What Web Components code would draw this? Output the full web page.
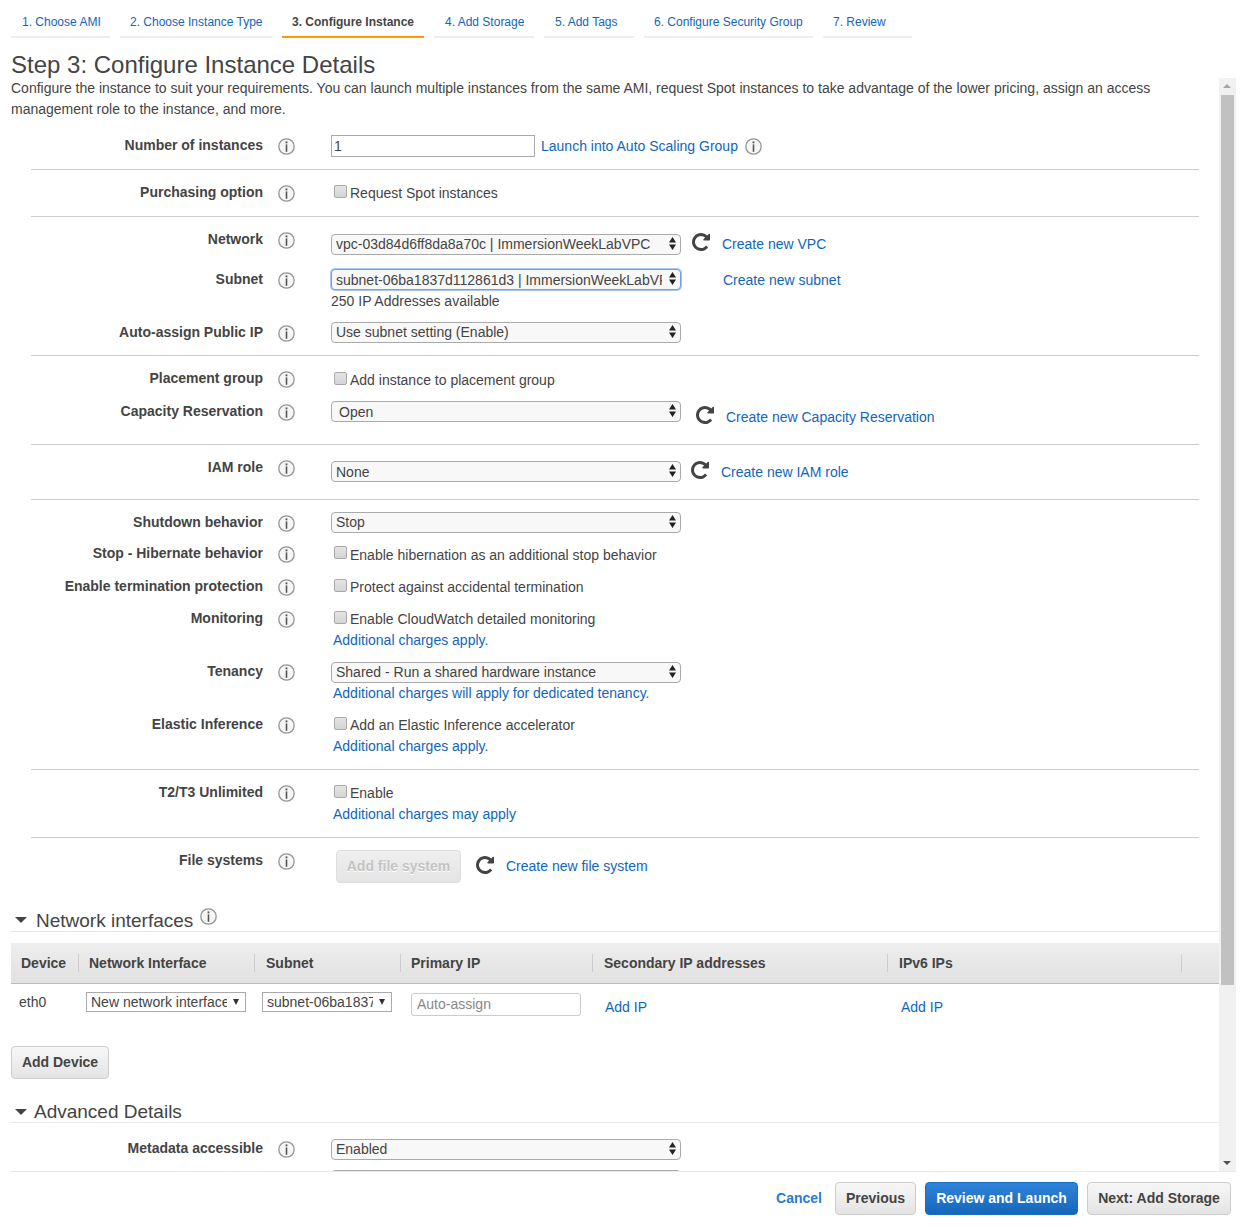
<!DOCTYPE html>
<html>
<head>
<meta charset="utf-8">
<title>Step 3: Configure Instance Details</title>
<style>
	html, body { margin: 0; padding: 0; }
	body {
		font: 14px/20px "Liberation Sans", Arial, sans-serif;
		color: #444;
		background: #fff;
		width: 1242px;
		height: 1229px;
		overflow: hidden;
	}
</style>
</head>
<body>
<launch-wizard>
	<wizard-tabs>
		<wizard-tab style="width:99px">1. Choose AMI</wizard-tab>
		<wizard-tab style="width:152px;padding-left:10px">2. Choose Instance Type</wizard-tab>
		<wizard-tab active style="width:142px;padding-left:10px">3. Configure Instance</wizard-tab>
		<wizard-tab style="width:100px">4. Add Storage</wizard-tab>
		<wizard-tab style="width:90px">5. Add Tags</wizard-tab>
		<wizard-tab style="width:169px;padding-left:10px">6. Configure Security Group</wizard-tab>
		<wizard-tab style="width:89px;padding-left:10px">7. Review</wizard-tab>
	</wizard-tabs>
	<page-title>Step 3: Configure Instance Details</page-title>
	<scroll-pane>
		<intro-text>Configure the instance to suit your requirements. You can launch multiple instances from the same AMI, request Spot instances to take advantage of the lower pricing, assign an access management role to the instance, and more.</intro-text>

		<form-section>
			<form-row label="Number of instances" height="34" style="--pad:15px">
				<control-line>
					<text-box style="width:204px">1</text-box>
					<aws-link style="margin:1px 0 0 6px">Launch into Auto Scaling Group</aws-link>
					<info-icon style="margin:3px 0 0 7px"></info-icon>
				</control-line>
			</form-row>
		</form-section>

		<form-section>
			<form-row label="Purchasing option" height="34">
				<aws-check>Request Spot instances</aws-check>
			</form-row>
		</form-section>

		<form-section>
			<form-row label="Network" height="40">
				<control-line style="margin-top:5px">
					<aws-select>vpc-03d84d6ff8da8a70c | ImmersionWeekLabVPC</aws-select>
					<reload-icon style="margin:-1px 0 0 11px"></reload-icon>
					<aws-link style="margin:0 0 0 12px">Create new VPC</aws-link>
				</control-line>
			</form-row>
			<form-row label="Subnet" height="53">
				<control-line>
					<aws-select focused low>subnet-06ba1837d112861d3 | ImmersionWeekLabVPC</aws-select>
					<aws-link style="margin:1px 0 0 42px">Create new subnet</aws-link>
				</control-line>
				<plain-note>250 IP Addresses available</plain-note>
			</form-row>
			<form-row label="Auto-assign Public IP" height="33">
				<aws-select>Use subnet setting (Enable)</aws-select>
			</form-row>
		</form-section>

		<form-section>
			<form-row label="Placement group" height="33">
				<aws-check style="margin-top:2px">Add instance to placement group</aws-check>
			</form-row>
			<form-row label="Capacity Reservation" height="43">
				<control-line>
					<aws-select inset="7" low>Open</aws-select>
					<reload-icon style="margin:5px 0 0 15px"></reload-icon>
					<aws-link style="margin:6px 0 0 12px">Create new Capacity Reservation</aws-link>
				</control-line>
			</form-row>
		</form-section>

		<form-section>
			<form-row label="IAM role" height="42">
				<control-line style="margin-top:4px">
					<aws-select low>None</aws-select>
					<reload-icon style="margin:0 0 0 10px"></reload-icon>
					<aws-link style="margin:1px 0 0 12px">Create new IAM role</aws-link>
				</control-line>
			</form-row>
		</form-section>

		<form-section>
			<form-row label="Shutdown behavior" height="31">
				<aws-select>Stop</aws-select>
			</form-row>
			<form-row label="Stop - Hibernate behavior" height="33">
				<aws-check style="margin-top:2px;--box-top:1px">Enable hibernation as an additional stop behavior</aws-check>
			</form-row>
			<form-row label="Enable termination protection" height="32">
				<aws-check>Protect against accidental termination</aws-check>
			</form-row>
			<form-row label="Monitoring" height="53">
				<aws-check>Enable CloudWatch detailed monitoring</aws-check>
				<aws-link style="margin:1px 0 0 2px">Additional charges apply.</aws-link>
			</form-row>
			<form-row label="Tenancy" height="53">
				<aws-select style="margin-top:1px">Shared - Run a shared hardware instance</aws-select>
				<aws-link style="margin:0 0 0 2px">Additional charges will apply for dedicated tenancy.</aws-link>
			</form-row>
			<form-row label="Elastic Inference" height="55">
				<aws-check>Add an Elastic Inference accelerator</aws-check>
				<aws-link style="margin:1px 0 0 2px">Additional charges apply.</aws-link>
			</form-row>
		</form-section>

		<form-section>
			<form-row label="T2/T3 Unlimited" height="55">
				<aws-check>Enable</aws-check>
				<aws-link style="margin:1px 0 0 2px">Additional charges may apply</aws-link>
			</form-row>
		</form-section>

		<form-section plain>
			<form-row label="File systems" height="59">
				<control-line>
					<aws-button disabled style="margin-left:5px;width:125px">Add file system</aws-button>
					<reload-icon style="margin:6px 0 0 15px"></reload-icon>
					<aws-link style="margin:6px 0 0 12px">Create new file system</aws-link>
				</control-line>
			</form-row>
		</form-section>

		<section-heading text-left="25" info style="--name-top:1px">Network interfaces</section-heading>
		<network-table></network-table>
		<aws-button style="width:98px;display:block">Add Device</aws-button>

		<section-heading text-left="23" style="margin-top:22px;--head-h:21px">Advanced Details</section-heading>
		<form-section plain>
			<form-row label="Metadata accessible" height="32" style="--pad:15px">
				<aws-select style="margin-top:1px">Enabled</aws-select>
			</form-row>
			<form-row label="" height="20" style="--pad:0px">
				<aws-select></aws-select>
			</form-row>
		</form-section>
	</scroll-pane>
	<wizard-footer>
		<aws-link bold style="margin-right:4px">Cancel</aws-link>
		<aws-button style="width:81px">Previous</aws-button>
		<aws-button primary style="width:153px">Review and Launch</aws-button>
		<aws-button style="width:144px">Next: Add Storage</aws-button>
	</wizard-footer>
</launch-wizard>

<script>
	// small helper, every element just stamps its markup in an open shadow root
	class BaseElement extends HTMLElement {
		constructor() {
			super();
			this.attachShadow({ mode: 'open' });
		}

		connectedCallback() {
			this.shadowRoot.innerHTML = this.markup();
		}
	}

	class LaunchWizard extends BaseElement {
		markup() {
			return `<style>:host { display: block; }</style><slot></slot>`;
		}
	}
	customElements.define('launch-wizard', LaunchWizard);

	class WizardTabs extends BaseElement {
		markup() {
			return `<style>
				:host { display: flex; gap: 10px; height: 38px; padding-left: 11px; }
			</style><slot></slot>`;
		}
	}
	customElements.define('wizard-tabs', WizardTabs);

	class WizardTab extends BaseElement {
		markup() {
			return `<style>
				:host {
					display: block;
					box-sizing: border-box;
					height: 38px;
					padding: 12px 0 0 11px;
					font-size: 12px;
					line-height: 20px;
					white-space: nowrap;
					color: #16b;
					border-bottom: 2px solid #eee;
				}
				:host([active]) { color: #444; font-weight: bold; border-bottom-color: #f90; }
			</style><slot></slot>`;
		}
	}
	customElements.define('wizard-tab', WizardTab);

	class PageTitle extends BaseElement {
		markup() {
			return `<style>
				:host {
					display: block;
					height: 40px;
					padding-left: 11px;
					box-sizing: border-box;
					font-size: 24px;
					line-height: 54px;
					overflow: visible;
					white-space: nowrap;
				}
			</style><slot></slot>`;
		}
	}
	customElements.define('page-title', PageTitle);

	class ScrollPane extends BaseElement {
		markup() {
			return `<style>
				:host { display: flex; height: 1093px; padding-left: 11px; width: 1225px; }
				.content { width: 1208px; height: 100%; overflow: hidden; }
				.track {
					position: relative;
					width: 17px;
					height: 100%;
					background: #f1f1f1;
				}
				.thumb {
					position: absolute;
					left: 2px;
					top: 17px;
					width: 13px;
					height: 890px;
					background: #c1c1c1;
				}
				.up, .down {
					position: absolute;
					left: 4px;
					width: 0;
					height: 0;
					border-left: 4px solid transparent;
					border-right: 4px solid transparent;
				}
				.up { top: 6px; border-bottom: 4px solid #a3a3a3; }
				.down { bottom: 6px; border-top: 4px solid #505050; }
			</style>
			<div class="content"><slot></slot></div>
			<div class="track"><div class="up"></div><div class="thumb"></div><div class="down"></div></div>`;
		}
	}
	customElements.define('scroll-pane', ScrollPane);

	class IntroText extends BaseElement {
		markup() {
			return `<style>
				:host { display: block; height: 42px; line-height: 21px; width: 1190px; }
			</style><slot></slot>`;
		}
	}
	customElements.define('intro-text', IntroText);

	class FormSection extends BaseElement {
		markup() {
			return `<style>
				:host { display: block; margin: 0 20px; border-bottom: 1px solid #ccc; }
				:host([plain]) { border-bottom: 0; }
			</style><slot></slot>`;
		}
	}
	customElements.define('form-section', FormSection);

	class FormRow extends BaseElement {
		markup() {
			const label = this.getAttribute('label');
			const height = this.getAttribute('height');
			const first = this === this.parentElement.firstElementChild;
			const icon = label ? '<info-icon></info-icon>' : '';
			return `<style>
				:host {
					display: grid;
					grid-template-columns: 232px 17px 1fr;
					column-gap: 15px;
					height: ${height}px;
					padding-top: var(--pad, ${first ? '12px' : '0'});
				}
				.label { font-weight: bold; text-align: right; white-space: nowrap; }
				info-icon { margin-top: 3px; }
				.controls { margin-left: 21px; min-width: 0; }
			</style>
			<div class="label">${label}</div>
			<div>${icon}</div>
			<div class="controls"><slot></slot></div>`;
		}
	}
	customElements.define('form-row', FormRow);

	class ControlLine extends BaseElement {
		markup() {
			return `<style>:host { display: flex; align-items: flex-start; }</style><slot></slot>`;
		}
	}
	customElements.define('control-line', ControlLine);

	class InfoIcon extends BaseElement {
		markup() {
			return `<style>:host { display: block; width: 17px; height: 17px; flex: none; }
				svg { display: block; }</style>
			<svg width="17" height="17" viewBox="0 0 17 17">
				<circle cx="8.5" cy="8.5" r="7.7" fill="#f6f6f6" stroke="#949494" stroke-width="1.3"/>
				<rect x="7.6" y="3.4" width="1.8" height="1.9" fill="#555"/>
				<rect x="7.7" y="6.4" width="1.6" height="7.4" fill="#555"/>
			</svg>`;
		}
	}
	customElements.define('info-icon', InfoIcon);

	class ReloadIcon extends BaseElement {
		markup() {
			return `<style>:host { display: block; width: 18px; height: 18px; flex: none; }
				svg { display: block; }</style>
			<svg width="18" height="18" viewBox="128 128 1536 1536">
				<path fill="#444" d="M1664 256v448q0 26-19 45t-45 19h-448q-42 0-59-40-17-39 14-69l138-138q-148-137-349-137-104 0-198.5 40.5t-163.5 109.5-109.5 163.5-40.5 198.5 40.5 198.5 109.5 163.5 163.5 109.5 198.5 40.5q119 0 225-52t179-147q7-10 23-12 15 0 25 9l137 138q9 8 9.5 20.5t-7.5 22.5q-109 132-264 204.5t-327 72.5q-156 0-298-61t-245-164-164-245-61-298 61-298 164-245 245-164 298-61q147 0 284.5 55.5t244.5 156.5l130-129q29-31 70-14 39 17 39 59z"/>
			</svg>`;
		}
	}
	customElements.define('reload-icon', ReloadIcon);

	class AwsLink extends BaseElement {
		markup() {
			return `<style>
				:host { display: block; color: #16b; white-space: nowrap; }
				:host([bold]) { font-weight: bold; color: #2a7bd3; }
			</style><slot></slot>`;
		}
	}
	customElements.define('aws-link', AwsLink);

	class PlainNote extends BaseElement {
		markup() {
			return `<style>:host { display: block; margin-top: 1px; }</style><slot></slot>`;
		}
	}
	customElements.define('plain-note', PlainNote);

	class TextBox extends BaseElement {
		markup() {
			return `<style>
				:host {
					display: block;
					box-sizing: border-box;
					height: 22px;
					line-height: 21px;
					padding-left: 2px;
					border: 1px solid #aaa;
					background: #fff;
					flex: none;
				}
			</style><slot></slot>`;
		}
	}
	customElements.define('text-box', TextBox);

	class AwsCheck extends BaseElement {
		markup() {
			return `<style>
				:host { display: flex; margin-top: 1px; white-space: nowrap; }
				.box {
					box-sizing: border-box;
					width: 13px;
					height: 13px;
					margin: var(--box-top, 2px) 3px 0 3px;
					border: 1px solid #aaa;
					border-radius: 2px;
					background: linear-gradient(#e4e4e4, #d4d4d4);
					flex: none;
				}
			</style><div class="box"></div><slot></slot>`;
		}
	}
	customElements.define('aws-check', AwsCheck);

	class AwsSelect extends BaseElement {
		markup() {
			const inset = this.getAttribute('inset') || 4;
			return `<style>
				:host {
					display: block;
					position: relative;
					box-sizing: border-box;
					width: 350px;
					height: 21px;
					flex: none;
					line-height: 19px;
					padding: 0 18px 0 ${inset}px;
					border: 1px solid #aaa;
					border-radius: 4px;
					background: #f8f8f8;
					white-space: nowrap;
				}
				:host([focused]) {
					border-color: #6f9fe6;
					box-shadow: 0 0 0 1px #a9c7f2;
				}
				:host([low]) { line-height: 21px; }
				.value { display: block; overflow: hidden; height: 19px; }
				svg { position: absolute; right: 4px; top: 2px; }
			</style>
			<span class="value"><slot></slot></span>
			<svg width="7" height="13" viewBox="0 0 7 13">
				<path fill="#222" d="M3.5 0 7 5.4H0zM0 7.6h7L3.5 13z"/>
			</svg>`;
		}
	}
	customElements.define('aws-select', AwsSelect);

	class AwsButton extends BaseElement {
		markup() {
			return `<style>
				:host {
					display: block;
					box-sizing: border-box;
					height: 33px;
					flex: none;
					line-height: 31px;
					text-align: center;
					font-weight: bold;
					white-space: nowrap;
					color: #444;
					border: 1px solid #ccc;
					border-radius: 4px;
					background: linear-gradient(#f7f7f7, #e4e4e4);
				}
				:host([primary]) {
					color: #fff;
					border-color: #1a6fc0;
					background: linear-gradient(#2f83d9, #1567ba);
				}
				:host([disabled]) {
					color: #c3c3c3;
					text-shadow: 0 1px 0 #fff;
					border-color: #ddd;
					background: linear-gradient(#efefef, #e4e4e4);
				}
			</style><slot></slot>`;
		}
	}
	customElements.define('aws-button', AwsButton);

	class SectionHeading extends BaseElement {
		markup() {
			const left = this.getAttribute('text-left');
			const info = this.hasAttribute('info') ? '<info-icon></info-icon>' : '';
			return `<style>
				:host {
					display: flex;
					box-sizing: content-box;
					height: var(--head-h, 22px);
					border-bottom: 1px solid #e9e9e9;
					font-size: 19px;
					line-height: 22px;
					white-space: nowrap;
				}
				.arrow {
					width: 0;
					height: 0;
					margin: 8px 0 0 4px;
					border-left: 6px solid transparent;
					border-right: 6px solid transparent;
					border-top: 6px solid #444;
					flex: none;
				}
				.name { margin: var(--name-top, 0) 0 0 ${left - 16}px; height: 20px; }
				info-icon { margin: -1px 0 0 7px; }
			</style>
			<div class="arrow"></div><div class="name"><slot></slot></div>${info}`;
		}
	}
	customElements.define('section-heading', SectionHeading);

	class MiniSelect extends BaseElement {
		markup() {
			return `<style>
				:host {
					display: block;
					position: relative;
					box-sizing: border-box;
					height: 20px;
					line-height: 18px;
					padding: 0 18px 0 4px;
					border: 1px solid #aaa;
					background: #fff;
					white-space: nowrap;
				}
				.value { display: block; overflow: hidden; }
				.arrow {
					position: absolute;
					right: 6px;
					top: 6px;
					width: 0;
					height: 0;
					border-left: 3px solid transparent;
					border-right: 3px solid transparent;
					border-top: 6px solid #333;
				}
			</style><span class="value"><slot></slot></span><div class="arrow"></div>`;
		}
	}
	customElements.define('mini-select', MiniSelect);

	class NetworkTable extends BaseElement {
		markup() {
			return `<style>
				:host { display: block; margin-top: 11px; height: 103px; }
				table { border-collapse: collapse; table-layout: fixed; width: 1208px; }
				th {
					height: 40px;
					padding: 0 0 0 11px;
					font-weight: bold;
					text-align: left;
					white-space: nowrap;
					background: linear-gradient(#eee, #e1e1e1);
					border-bottom: 1px solid #bbb;
					position: relative;
				}
				th:first-child, th:nth-child(2), th:nth-child(4) { padding-left: 10px; }
				th:not(:last-child)::after {
					content: "";
					position: absolute;
					right: 0;
					top: 11px;
					width: 1px;
					height: 18px;
					background: #ccc;
				}
				td { padding: 0; vertical-align: top; height: 62px; white-space: nowrap; }
				.auto {
					box-sizing: border-box;
					width: 170px;
					height: 23px;
					line-height: 21px;
					padding-left: 5px;
					color: #888;
					border: 1px solid #ccc;
					border-radius: 3px;
				}
			</style>
			<table>
				<colgroup>
					<col style="width:68px"><col style="width:176px"><col style="width:146px">
					<col style="width:192px"><col style="width:295px"><col style="width:294px"><col>
				</colgroup>
				<tr>
					<th>Device</th><th>Network Interface</th><th>Subnet</th><th>Primary IP</th>
					<th>Secondary IP addresses</th><th>IPv6 IPs</th><th></th>
				</tr>
				<tr>
					<td style="padding:8px 0 0 8px">eth0</td>
					<td style="padding:8px 9px 0 7px"><mini-select>New network interface</mini-select></td>
					<td style="padding:8px 9px 0 7px"><mini-select>subnet-06ba1837</mini-select></td>
					<td style="padding:9px 0 0 10px"><div class="auto">Auto-assign</div></td>
					<td style="padding:13px 0 0 12px"><aws-link>Add IP</aws-link></td>
					<td style="padding:13px 0 0 13px"><aws-link>Add IP</aws-link></td>
					<td></td>
				</tr>
			</table>`;
		}
	}
	customElements.define('network-table', NetworkTable);

	class WizardFooter extends BaseElement {
		markup() {
			return `<style>
				:host {
					display: flex;
					justify-content: flex-end;
					gap: 9px;
					box-sizing: border-box;
					margin-left: 11px;
					width: 1225px;
					height: 55px;
					padding: 10px 5px 0 0;
					align-items: flex-start;
					border-top: 1px solid #e9e9e9;
				}
				::slotted(aws-link) { line-height: 33px; }
			</style><slot></slot>`;
		}
	}
	customElements.define('wizard-footer', WizardFooter);
</script>
</body>
</html>
